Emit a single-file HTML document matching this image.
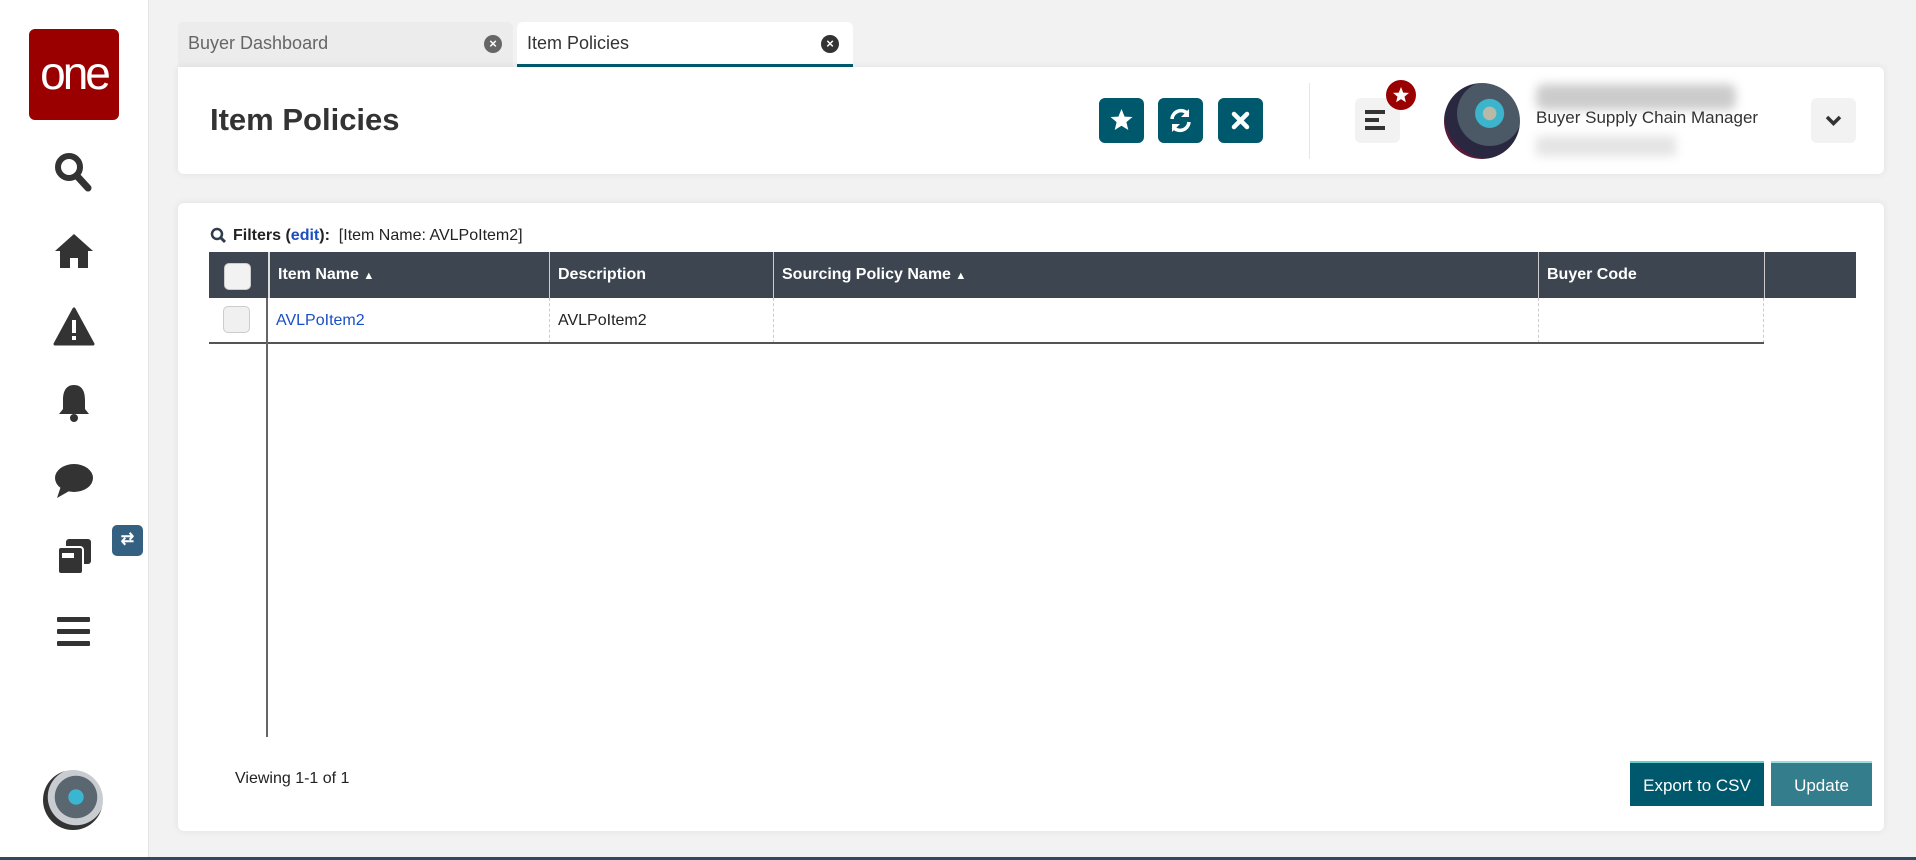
<!DOCTYPE html>
<html><head><meta charset="utf-8"><style>
*{box-sizing:border-box;margin:0;padding:0}
body{width:1916px;height:860px;background:#f2f2f2;font-family:"Liberation Sans",sans-serif;position:relative;overflow:hidden;color:#222}
.abs{position:absolute}
#side{left:0;top:0;width:149px;height:860px;background:#fff;border-right:1px solid #e4e4e4}
.tab{position:absolute;top:22px;height:45px;border-radius:6px 6px 0 0;font-size:18px;padding:11px 10px;color:#666}
.x{position:absolute;top:13px;width:18px;height:18px;border-radius:50%;background:#555;color:#fff;font-size:13px;line-height:18px;text-align:center;font-weight:bold}
.card{background:#fff;border-radius:6px;box-shadow:0 0 8px rgba(0,0,0,.08)}
.tb{position:absolute;width:45px;height:45px;background:#00586c;border-radius:6px;top:98px}
th,td{font-size:16px;text-align:left}
.hd{position:absolute;top:252px;height:46px;color:#fff;font-weight:bold;font-size:16px;line-height:46px;padding-left:8px;border-left:1px solid #ccc}
.cell{position:absolute;top:298px;height:45px;line-height:45px;font-size:16px;padding-left:8px;border-left:1px dashed #ccc}
</style></head><body>
<div id="side" class="abs">
 <div class="abs" style="left:29px;top:29px;width:90px;height:91px;background:#9b0000;border-radius:6px;color:#fff;font-size:46px;text-align:center;line-height:88px;letter-spacing:-3px">one</div>
 <svg class="abs" style="left:53px;top:151px" width="40" height="42" viewBox="0 0 40 42"><circle cx="16" cy="16" r="11" fill="none" stroke="#333" stroke-width="6"/><line x1="24" y1="25" x2="35" y2="37" stroke="#333" stroke-width="7" stroke-linecap="round"/></svg>
 <svg class="abs" style="left:53px;top:232px" width="42" height="38" viewBox="0 0 42 38"><path d="M21 2 L2 19 L7 19 L7 36 L17 36 L17 26 L25 26 L25 36 L35 36 L35 19 L40 19 Z" fill="#333"/></svg>
 <svg class="abs" style="left:53px;top:307px" width="42" height="40" viewBox="0 0 42 40"><path d="M21 2 L40 37 L2 37 Z" fill="#333" stroke="#333" stroke-width="3" stroke-linejoin="round"/><rect x="19" y="13" width="4" height="13" fill="#fff"/><rect x="19" y="29" width="4" height="4" fill="#fff"/></svg>
 <svg class="abs" style="left:56px;top:382px" width="36" height="42" viewBox="0 0 36 42"><path d="M18 3 C9 3 7 11 7 18 L7 27 L3 32 L33 32 L29 27 L29 18 C29 11 27 3 18 3Z" fill="#333"/><circle cx="18" cy="36" r="4" fill="#333"/></svg>
 <svg class="abs" style="left:53px;top:462px" width="42" height="38" viewBox="0 0 42 38"><ellipse cx="21" cy="16" rx="19" ry="14" fill="#333"/><path d="M8 24 L4 36 L18 28Z" fill="#333"/></svg>
 <svg class="abs" style="left:54px;top:536px" width="40" height="40" viewBox="0 0 40 40"><rect x="12" y="3" width="25" height="25" rx="3" fill="#333"/><rect x="4" y="11" width="25" height="27" rx="3" fill="#333" stroke="#fff" stroke-width="2"/><rect x="8" y="17" width="12" height="5" fill="#fff"/></svg>
 <div class="abs" style="left:112px;top:525px;width:31px;height:31px;border-radius:5px;background:#346182;color:#fff;font-size:16px;text-align:center;line-height:30px;font-weight:bold">⇄</div>
 <div class="abs" style="left:57px;top:617px;width:33px;height:5px;background:#333;border-radius:1px"></div>
 <div class="abs" style="left:57px;top:629px;width:33px;height:5px;background:#333;border-radius:1px"></div>
 <div class="abs" style="left:57px;top:641px;width:33px;height:5px;background:#333;border-radius:1px"></div>
 <div class="abs" style="left:43px;top:770px;width:60px;height:60px;border-radius:50%;background:radial-gradient(circle at 55% 45%,#3bb6d0 0 16%,#5a6670 17% 45%,#c9ccd0 46% 60%,#333 61%)"></div>
</div>

<div class="tab" style="left:178px;width:335px;background:#ececec">Buyer Dashboard<span class="x" style="left:306px;background:#666">×</span></div>
<div class="tab" style="left:517px;width:336px;background:#fff;color:#333;border-bottom:3px solid #005a6e">Item Policies<span class="x" style="left:304px;background:#333">×</span></div>

<div class="card abs" style="left:178px;top:67px;width:1706px;height:107px;border-radius:0 6px 6px 6px"></div>
<div class="abs" style="left:210px;top:102px;font-size:31px;font-weight:bold;color:#333">Item Policies</div>
<div class="tb" style="left:1099px"><svg width="45" height="45" viewBox="0 0 45 45"><path d="M22.5 11 L25.6 18.6 L33.5 19 L27.4 24.1 L29.3 32 L22.5 27.7 L15.7 32 L17.6 24.1 L11.5 19 L19.4 18.6Z" fill="#fff"/></svg></div>
<div class="tb" style="left:1158px"><svg width="45" height="45" viewBox="0 0 45 45"><path d="M14 21 A9 9 0 0 1 30 16" fill="none" stroke="#fff" stroke-width="3.5"/><path d="M31 11 L31 19 L23 19Z" fill="#fff"/><path d="M31 24 A9 9 0 0 1 15 29" fill="none" stroke="#fff" stroke-width="3.5"/><path d="M14 34 L14 26 L22 26Z" fill="#fff"/></svg></div>
<div class="tb" style="left:1218px"><svg width="45" height="45" viewBox="0 0 45 45"><path d="M16 16 L29 29 M29 16 L16 29" stroke="#fff" stroke-width="4.5" stroke-linecap="round"/></svg></div>
<div class="abs" style="left:1309px;top:83px;width:1px;height:76px;background:#e6e6e6"></div>
<div class="abs" style="left:1355px;top:98px;width:45px;height:45px;background:#f2f2f2;border-radius:6px"></div>
<div class="abs" style="left:1365px;top:110px;width:20px;height:4px;background:#333"></div>
<div class="abs" style="left:1365px;top:118px;width:14px;height:4px;background:#333"></div>
<div class="abs" style="left:1365px;top:126px;width:20px;height:4px;background:#333"></div>
<div class="abs" style="left:1386px;top:80px;width:30px;height:30px;border-radius:50%;background:#9b0000"><svg width="30" height="30" viewBox="0 0 30 30"><path d="M15 7 L17.2 12.6 L23 12.9 L18.5 16.6 L19.9 22.3 L15 19.1 L10.1 22.3 L11.5 16.6 L7 12.9 L12.8 12.6Z" fill="#fff"/></svg></div>
<div class="abs" style="left:1444px;top:83px;width:76px;height:76px;border-radius:50%;background:radial-gradient(circle at 60% 40%,#b9b9a8 0 10%,#3cb5cc 11% 22%,#4b5966 23% 50%,#2a2740 51% 70%,#5b1a3a 71%)"></div>
<div class="abs" style="left:1536px;top:84px;width:200px;height:26px;background:#ccc;filter:blur(5px);border-radius:8px"></div>
<div class="abs" style="left:1536px;top:108px;font-size:17px;color:#333">Buyer Supply Chain Manager</div>
<div class="abs" style="left:1536px;top:136px;width:140px;height:20px;background:#e4e4e4;filter:blur(5px)"></div>
<div class="abs" style="left:1811px;top:98px;width:45px;height:45px;background:#f2f2f2;border-radius:6px"><svg width="45" height="45" viewBox="0 0 45 45"><path d="M16 19 L22.5 25.5 L29 19" fill="none" stroke="#333" stroke-width="3.5"/></svg></div>

<div class="card abs" style="left:178px;top:203px;width:1706px;height:628px"></div>
<svg class="abs" style="left:210px;top:227px" width="18" height="18" viewBox="0 0 18 18"><circle cx="7" cy="7" r="5" fill="none" stroke="#2f3c4c" stroke-width="2.5"/><line x1="10.5" y1="10.5" x2="15" y2="15" stroke="#2f3c4c" stroke-width="3"/></svg>
<div class="abs" style="left:233px;top:227px;font-size:16px"><b>Filters (<span style="color:#1a4fc4">edit</span>):</b>&nbsp; [Item Name: AVLPoItem2]</div>
<div class="abs" style="left:209px;top:252px;width:1647px;height:46px;background:#3c4550"></div>
<div class="abs" style="left:224px;top:263px;width:27px;height:27px;border-radius:5px;background:#f2f2f2;border:1px solid #ccc"></div>
<div class="hd" style="left:268px;width:281px;border-left:2px solid #ddd">Item Name <span style="font-size:11px">▲</span></div>
<div class="hd" style="left:549px;width:224px">Description</div>
<div class="hd" style="left:773px;width:765px">Sourcing Policy Name <span style="font-size:11px">▲</span></div>
<div class="hd" style="left:1538px;width:226px">Buyer Code</div>
<div class="hd" style="left:1764px;width:92px"></div>
<div class="abs" style="left:223px;top:306px;width:27px;height:27px;border-radius:5px;background:#f0f0f0;border:1px solid #ccc"></div>
<div class="cell" style="left:268px;width:281px;color:#1a4fc4;border-left:none">AVLPoItem2</div>
<div class="cell" style="left:549px;width:224px">AVLPoItem2</div>
<div class="cell" style="left:773px;width:765px"></div>
<div class="cell" style="left:1538px;width:226px;border-right:1px dashed #ccc"></div>
<div class="abs" style="left:209px;top:342px;width:1555px;height:2px;background:#555"></div>
<div class="abs" style="left:266px;top:298px;width:2px;height:439px;background:#666"></div>
<div class="abs" style="left:235px;top:770px;font-size:16px">Viewing 1-1 of 1</div>
<div class="abs" style="left:1630px;top:761px;width:134px;height:45px;background:#00586c;color:#fff;font-size:17px;text-align:center;line-height:45px;border-top:2px solid #6cc">Export to CSV</div>
<div class="abs" style="left:1771px;top:761px;width:101px;height:45px;background:#347d8c;color:#fff;font-size:17px;text-align:center;line-height:45px;border-top:2px solid #9dd">Update</div>
<div class="abs" style="left:0;top:857px;width:1916px;height:3px;background:#2e4a5c"></div>
</body></html>
